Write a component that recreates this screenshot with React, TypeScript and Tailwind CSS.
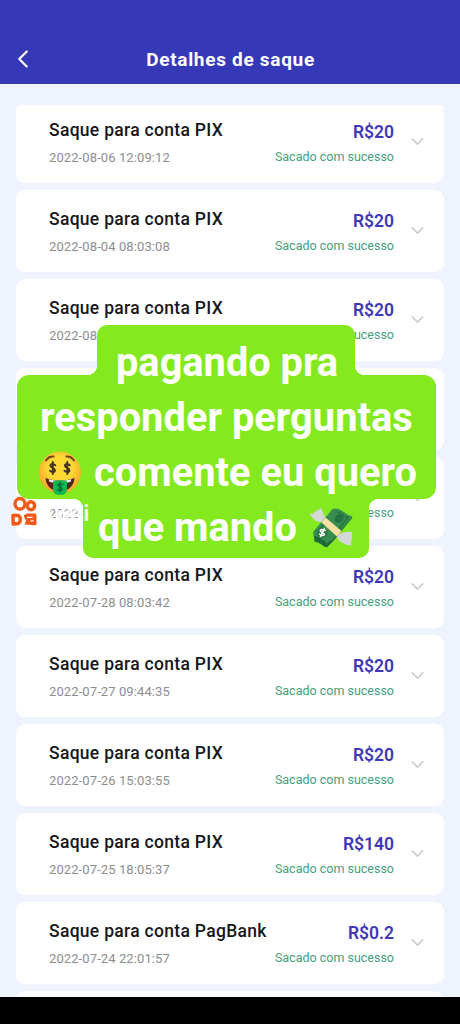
import { ChevronDown, ChevronLeft } from 'lucide-react';

type Withdrawal = {
    id: number;
    account: string;
    date: string;
    amount: string;
};

const WITHDRAWALS: Withdrawal[] = [
    { id: 1, account: 'PIX', date: '2022-08-06 12:09:12', amount: 'R$20' },
    { id: 2, account: 'PIX', date: '2022-08-04 08:03:08', amount: 'R$20' },
    { id: 3, account: 'PIX', date: '2022-08-02 08:03:22', amount: 'R$20' },
    { id: 4, account: 'PIX', date: '2022-07-30 08:03:15', amount: 'R$20' },
    { id: 5, account: 'PIX', date: '2022-07-29 08:03:31', amount: 'R$20' },
    { id: 6, account: 'PIX', date: '2022-07-28 08:03:42', amount: 'R$20' },
    { id: 7, account: 'PIX', date: '2022-07-27 09:44:35', amount: 'R$20' },
    { id: 8, account: 'PIX', date: '2022-07-26 15:03:55', amount: 'R$20' },
    { id: 9, account: 'PIX', date: '2022-07-25 18:05:37', amount: 'R$140' },
    { id: 10, account: 'PagBank', date: '2022-07-24 22:01:57', amount: 'R$0.2' },
];

export default function App() {
    return (
        <div className="relative flex h-[1024px] w-[460px] flex-col overflow-hidden bg-[#eef3fe] font-['Roboto',sans-serif]">
            <header className="flex h-[84px] shrink-0 items-end border-b border-[#3a379f] bg-[#3539b7] pb-[9px]">
                <div className="grid w-full grid-cols-[40px_1fr_40px] items-center">
                    <ChevronLeft
                        className="ml-[8px] h-[30px] w-[30px] text-white"
                        strokeWidth={1.7}
                    />
                    <h1 className="pt-px pl-px text-center text-[19px] leading-[26px] font-bold tracking-[0.7px] text-white">
                        Detalhes de saque
                    </h1>
                </div>
            </header>

            <main className="flex flex-1 flex-col gap-[7px] overflow-hidden px-4 pt-[21px]">
                {WITHDRAWALS.map((item) => (
                    <WithdrawalCard key={item.id} item={item} />
                ))}
                <div className="h-[82px] shrink-0 rounded-[9px] bg-[#fbfdff]" />
            </main>

            <footer className="h-[27px] shrink-0 bg-black" />

            <Caption />
            <Watermark />
        </div>
    );
}

function WithdrawalCard({ item }: { item: Withdrawal }) {
    return (
        <article className="flex h-[82px] shrink-0 items-end justify-between rounded-[9px] bg-white pr-4 pb-4 pl-[33px] first:h-[78px] first:rounded-t-[5px]">
            <div className="whitespace-nowrap">
                <p className="text-[17.5px] leading-6 font-medium tracking-[0.3px] text-[#17171b]">
                    Saque para conta {item.account}
                </p>
                <p className="mt-[7px] text-[13px] leading-[18px] tracking-[0.1px] text-[#8d8d90]">
                    {item.date}
                </p>
            </div>
            <div className="flex items-end gap-[13px]">
                <div className="text-right whitespace-nowrap">
                    <p className="text-[17.5px] leading-6 font-semibold text-[#4038b8]">
                        {item.amount}
                    </p>
                    <p className="mt-1 mb-px text-[12.5px] leading-[18px] text-[#45a07c]">
                        Sacado com sucesso
                    </p>
                </div>
                <ChevronDown
                    className="mb-[15px] size-[21px] text-[#cbcbd3]"
                    strokeWidth={1.8}
                />
            </div>
        </article>
    );
}

function Caption() {
    return (
        <div className="absolute top-[325px] left-[17px] flex w-[419px] flex-col items-start text-[39.75px] leading-[55px] font-bold whitespace-nowrap text-white">
            <div className="relative ml-[80px] h-[50px] w-[258px] rounded-t-[10px] bg-[#84e91f] pl-[19px]">
                <span className="absolute bottom-0 -left-[10px] size-[10px] bg-[radial-gradient(circle_at_0_0,transparent_10px,#84e91f_10.5px)]" />
                <span className="absolute -right-[10px] bottom-0 size-[10px] bg-[radial-gradient(circle_at_100%_0,transparent_10px,#84e91f_10.5px)]" />
                <p className="relative z-10 mt-[10px]">pagando pra</p>
            </div>
            <div className="h-[124px] w-full rounded-[12px] bg-[#84e91f] pt-[15px]">
                <p className="ml-[23px] tracking-[0.05px]">responder perguntas</p>
                <p className="ml-[21px] flex items-center">
                    <MoneyFace />
                    <span className="ml-[12px] tracking-[0.05px]">comente eu quero</span>
                </p>
            </div>
            <div className="relative ml-[66px] h-[59px] w-[286px] rounded-b-[10px] bg-[#84e91f] pl-[15px]">
                <span className="absolute top-0 -left-[10px] size-[10px] bg-[radial-gradient(circle_at_0_100%,transparent_10px,#84e91f_10.5px)]" />
                <span className="absolute top-0 -right-[10px] size-[10px] bg-[radial-gradient(circle_at_100%_100%,transparent_10px,#84e91f_10.5px)]" />
                <p className="flex items-center pt-px">
                    que mando
                    <MoneyWings />
                </p>
            </div>
        </div>
    );
}

function Watermark() {
    return (
        <div className="absolute top-[496px] left-[10px] flex items-start">
            <svg viewBox="0 0 28 31" className="h-[31px] w-[28px]" fill="none">
                <g stroke="#ee5a18" strokeWidth="3.4">
                    <ellipse cx="10" cy="7.800" rx="5" ry="5.300" />
                    <ellipse cx="21" cy="9.800" rx="3.600" ry="4" />
                    <path d="M3 19.500h5.500l1.700 2.200v3.500L8.500 27.500 3.200 28Z" strokeLinejoin="round" />
                </g>
                <path
                    d="M13.500 19.500 17 17.500h8q1.500 0 1.500 1.500v9q0 1.500-1.500 1.300L14.500 28.500l1.500-4Z"
                    fill="#ee5a18"
                />
                <path d="M17 21.300h5.500M20.500 24.800h3" stroke="#fff" strokeWidth="1.300" />
            </svg>
            <span className="ml-[3px] pt-[2px] text-[22px] leading-[31px] font-bold tracking-[0.4px] text-white/85">
                Kwai
            </span>
        </div>
    );
}

function MoneyFace() {
    return (
        <svg viewBox="0 0 44 46" className="h-[46px] w-[44px]">
            <defs>
                <radialGradient id="face" cx="50%" cy="40%" r="58%">
                    <stop offset="0.5" stopColor="#fdd835" />
                    <stop offset="1" stopColor="#f4a72b" />
                </radialGradient>
            </defs>
            <circle cx="22" cy="22.5" r="21" fill="url(#face)" />
            <path
                d="M8 10.500q3-4.500 7.500-4M36 10.500q-3-4.500-7.500-4"
                fill="none"
                stroke="#6d4215"
                strokeWidth="2"
                strokeLinecap="round"
            />
            <g fill="none" stroke="#433022" strokeWidth="1.9" strokeLinecap="round">
                <path id="dollar" d="M17.300 15.300q-3-2.600-4.700-.5c-1.400 2.300 4.300 3 4.300 5.400 0 2.500-3.400 2.500-5 .5M14.800 12v12" />
                <use href="#dollar" x="14.500" />
            </g>
            <path d="M7.500 28q14.500 5.500 29 0c-.5 8.500-6.500 13-14.500 13S8 36.500 7.500 28Z" fill="#53251c" />
            <path d="M10.500 29.300q11.500 3.300 23 0l-1.200 2.700q-10.300 2.300-20.600 0Z" fill="#fff" />
            <path d="M15 31.500q7-2.500 14 0v7.500q0 6-7 6t-7-6Z" fill="#0fb84d" />
            <path
                d="M24.500 34.700q-2.800-1.800-4.300-.3c-1.200 2 4 2.400 4 4.500s-3 2-4.500.6M22.200 32.300v9.500"
                fill="none"
                stroke="#087039"
                strokeWidth="1.6"
                strokeLinecap="round"
            />
        </svg>
    );
}

function MoneyWings() {
    return (
        <svg viewBox="0 0 46 42" className="ml-[11px] h-[42px] w-[46px]">
            <path
                d="M17.500 11.500 13 1l-2.500 2-2-1 .5 2.500H5.500l1.500 2L1 6.500l3 3.500c3 5.500 8 4.500 11.500 5.500Z"
                fill="#d3d8d6"
            />
            <path
                d="M28.500 29.500q4.500-5.500 16-4.500l-1 4 1 1.500-1.500 2 1.500 2-2 .5 1 3.500c-6.500-.5-12.500-3-15-9Z"
                fill="#d3d8d6"
            />
            <path d="M5.500 25 24.500 3q5-3 11 2.500 5 3.500 9 5L25 34.500q-2.500 2-5.500 5.500-2.500 1-6-2.500-4-2.500-7-3Z" fill="#1f6a3a" />
            <path d="M5.500 24.500 24.500 2q5-1.500 10.500 2.500 5 4 9.500 5L25 32.500q-4 1-6 4-3-5-13.500-8Z" fill="#388e50" />
            <path d="M27 5q3-1 7 2.500 3 2.500 6 3l-9 11.500M9 25.500l7-8" fill="none" stroke="#267141" strokeWidth="1.300" />
            <ellipse cx="31" cy="11.500" rx="4.800" ry="4" fill="#267141" transform="rotate(-45 31 11.500)" />
            <circle cx="14.500" cy="26" r="5.300" fill="#2c7d45" />
            <path d="m17.500 10.500 16 13.500-4.500 5.500-15.500-14Z" fill="#f8e0a2" />
            <path
                d="M17 23.500q-3.500-1.800-4.700 0c-.5 2 4 1.800 4 3.700 0 1.800-2.800 1.800-4.500 0M16.500 21.500l-4 8"
                fill="none"
                stroke="#fff"
                strokeWidth="1.600"
                strokeLinecap="round"
            />
        </svg>
    );
}
